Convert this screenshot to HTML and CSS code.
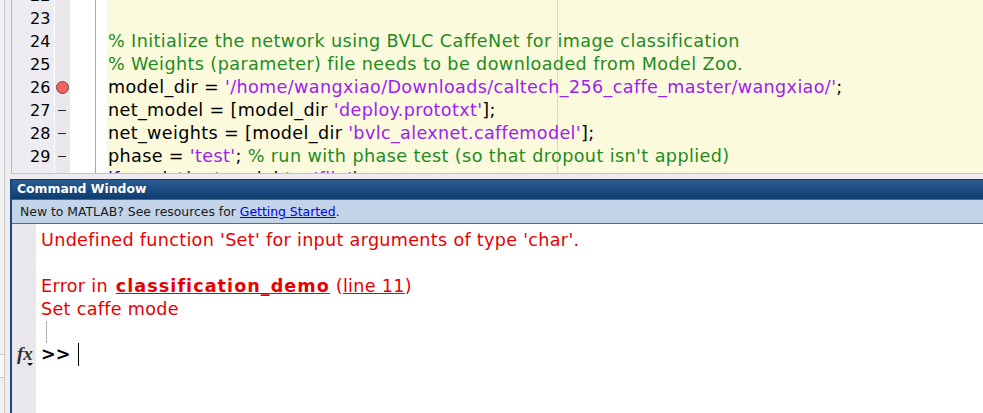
FILE: index.html
```html
<!DOCTYPE html>
<html>
<head>
<meta charset="utf-8">
<link rel="stylesheet" href="styles.css">
</head>
<body>
<div class="app">
  <div class="edge"><div class="edgebox"></div></div>
  <div class="main">
    <section class="editor">
      <div class="gutter">
        <div class="num">22</div>
        <div class="num">23</div>
        <div class="num">24</div>
        <div class="num">25</div>
        <div class="num">26<span class="bp"></span></div>
        <div class="num">27<span class="dash"></span></div>
        <div class="num">28<span class="dash"></span></div>
        <div class="num">29<span class="dash"></span></div>
        <div class="num">30</div>
      </div>
      <div class="fold"></div>
      <div class="pad"></div>
      <div class="code">
        <div class="rule"></div>
        <div class="line"> </div>
        <div class="line"> </div>
        <div class="line c">% Initialize the network using BVLC CaffeNet for image classification</div>
        <div class="line c">% Weights (parameter) file needs to be downloaded from Model Zoo.</div>
        <div class="line">model_dir = <span class="s">'/home/wangxiao/Downloads/caltech_256_caffe_master/wangxiao/'</span>;</div>
        <div class="line">net_model = [model_dir <span class="s">'deploy.prototxt'</span>];</div>
        <div class="line">net_weights = [model_dir <span class="s">'bvlc_alexnet.caffemodel'</span>];</div>
        <div class="line">phase = <span class="s">'test'</span>; <span class="c">% run with phase test (so that dropout isn't applied)</span></div>
        <div class="line"><span class="k">if</span> ~exist(net_weights, <span class="s">'file'</span>)</div>
      </div>
    </section>
    <div class="split"></div>
    <section class="cmd">
      <div class="title">Command Window</div>
      <div class="notice">New to MATLAB? See resources for <a class="link">Getting Started</a>.</div>
      <div class="cbody">
        <div class="fxbar">
          <span class="fx">fx</span>
          <svg class="caret" width="6" height="3" viewBox="0 0 6 3"><path d="M0 0h6L3 3z" fill="#111"/></svg>
        </div>
        <div class="out">
          <div class="oline">Undefined function 'Set' for input arguments of type 'char'.</div>
          <div class="oline"> </div>
          <div class="oline">Error in <b class="fn">classification_demo</b> (<span class="ln">line 11</span>)</div>
          <div class="oline">Set caffe mode</div>
          <div class="tick"></div>
          <div class="prompt"><span class="pr">&gt;&gt;</span><span class="cursor"></span></div>
        </div>
      </div>
    </section>
  </div>
</div>
</body>
</html>
```
FILE: styles.css
```css
html, body { margin: 0; padding: 0; }
body { width: 983px; height: 413px; overflow: hidden; background: #f0f0f0; font-family: "DejaVu Sans", sans-serif; }
.app { display: flex; height: 413px; }
.edge { width: 4px; background: #f0f0f0; border-right: 1px solid #c8c8c8; flex: none; position: relative; }
.edgebox { position: absolute; left: 0; right: 0; top: 354px; height: 22px; background: #f8f8f8; border-top: 1px solid #c8c8c8; border-bottom: 1px solid #c8c8c8; }
.main { flex: 1; min-width: 0; display: flex; flex-direction: column; background: #eeecf0; }
.editor { height: 173px; margin-left: 6px; display: flex; overflow: hidden; border-left: 1px solid #b5b3b8; border-bottom: 1px solid #c5c3c8; flex: none; }
.gutter { width: 58px; flex: none; background: linear-gradient(90deg, #eeecf0 42px, #fff 42px, #fff 43px, #e9e7ec 43px); margin-top: -16px; }
.num { height: 23px; line-height: 23px; font-size: 16px; color: #000; position: relative; padding-left: 18px; box-sizing: border-box; }
.bp { position: absolute; left: 44px; top: 5px; width: 11px; height: 11px; border-radius: 50%; background: #f96060; border: 1px solid #555; }
.dash { position: absolute; left: 46px; top: 11px; width: 8px; height: 1px; background: #222; }
.fold { width: 25px; flex: none; background: #fff; border-right: 1px solid #a8a8a8; }
.pad { width: 11px; flex: none; background: #fff; }
.code { flex: 1; min-width: 0; position: relative; background: #fcfadc; margin-top: -16px; padding-left: 1px; }
.rule { position: absolute; left: 450px; top: 0; bottom: 0; width: 1px; background: #d8d8c8; }
.line { height: 23px; line-height: 23px; font-size: 17.6px; letter-spacing: 0.35px; color: #000; white-space: pre; position: relative; }
.c { color: #228b22; letter-spacing: 0.4px; }
.s { color: #a020f0; }
.k { color: #0000ff; }
.split { height: 5px; flex: none; }
.cmd { flex: 1; min-height: 0; margin-left: 5px; display: flex; flex-direction: column; border-left: 2px solid #16497f; }
.title { height: 21px; flex: none; box-sizing: border-box; border-top: 1px solid #0f3f7c; border-bottom: 1px solid #5a6672; background: linear-gradient(#2a5c92, #0e3c70); color: #fff; font-size: 12.4px; font-weight: bold; line-height: 18px; padding-left: 5px; }
.notice { height: 24px; flex: none; box-sizing: border-box; background: #c3d4e8; border-bottom: 1px solid #666; font-size: 12.4px; line-height: 23px; color: #1a1a1a; padding-left: 8px; }
.link { color: #0000ee; text-decoration: underline; }
.cbody { flex: 1; min-height: 0; display: flex; background: #fff; }
.fxbar { width: 24px; flex: none; background: #e9e7ec; position: relative; }
.fx { position: absolute; left: 5px; top: 119px; font-family: "Liberation Serif", serif; font-style: italic; font-weight: bold; font-size: 19px; color: #333; line-height: 22px; }
.caret { position: absolute; left: 15px; top: 139px; }
.out { flex: 1; min-width: 0; padding: 5px 0 0 5px; position: relative; }
.oline { height: 23px; line-height: 23px; font-size: 17.6px; letter-spacing: 0.3px; color: #e80000; white-space: pre; }
.fn { text-decoration: underline; letter-spacing: 1.05px; margin-left: 2px; }
.ln { text-decoration: underline; }
.tick { position: absolute; left: 10px; top: 97px; width: 1px; height: 22px; background: #b0b0b0; }
.prompt { position: absolute; left: 5px; top: 119px; height: 23px; display: flex; align-items: center; }
.pr { font-size: 17.6px; font-weight: bold; color: #000; line-height: 23px; width: 37px; }
.cursor { width: 1px; height: 23px; background: #000; }
```
